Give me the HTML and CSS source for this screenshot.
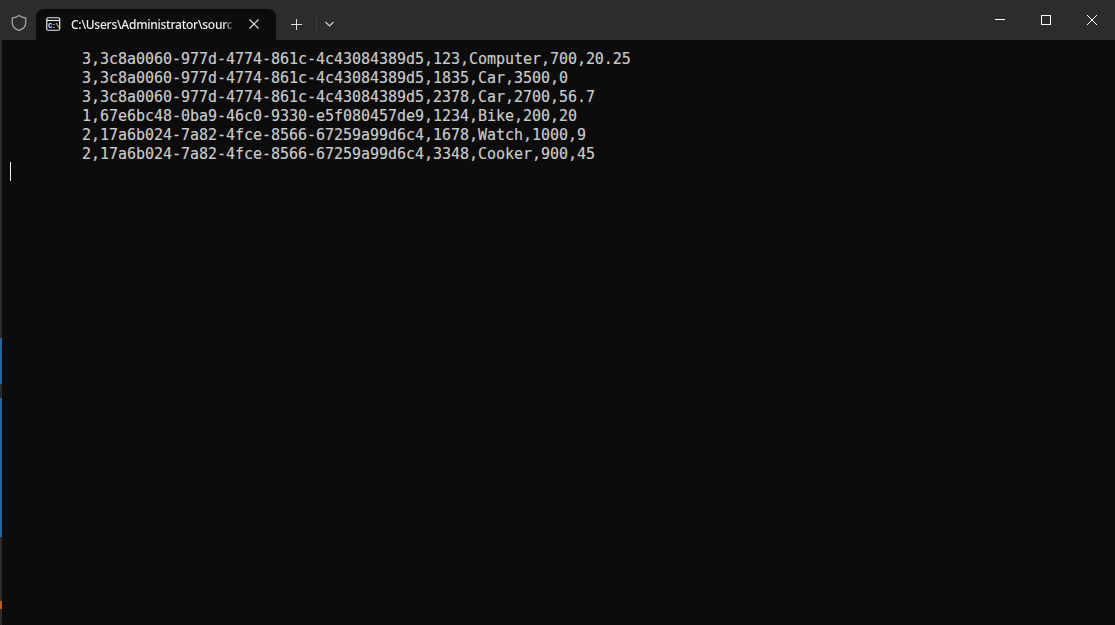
FILE: index.html
```html
<!DOCTYPE html>
<html lang="en">
<head>
<meta charset="utf-8">
<title>Terminal</title>
<link rel="stylesheet" href="styles.css">
</head>
<body>
<div class="window">
  <header class="titlebar">
    <div class="shield-wrap">
      <svg class="shield" width="18" height="18" viewBox="0 0 18 18"><path d="M9 1.600c2 1.500 4.200 2.200 6.700 2.400v5c0 3.600-2.400 6-6.700 7.400C4.700 15 2.300 12.600 2.300 9V4C4.800 3.800 7 3.100 9 1.600z"/></svg>
    </div>
    <div class="tab">
      <svg class="tab-icon" width="16" height="15" viewBox="0 0 16 15"><rect x=".75" y=".75" width="13" height="12.500" rx="1.500"/><path d="M1 3.500h12.500"/></svg>
      <span class="tab-prompt">C:\</span>
      <span class="tab-title">C:\Users\Administrator\sourc</span>
      <svg class="tab-close" width="10" height="10" viewBox="0 0 10 10"><path d="M.5.500l9 9M9.500.500l-9 9"/></svg>
    </div>
    <button class="new-tab"><svg width="11" height="11" viewBox="0 0 11 11"><path d="M5.500 0v11M0 5.500h11"/></svg></button>
    <span class="divider"></span>
    <button class="tab-menu"><svg width="9" height="6" viewBox="0 0 9 6"><path d="M.5 1l4 4 4-4"/></svg></button>
    <div class="controls">
      <button class="ctl"><svg width="10" height="2" viewBox="0 0 10 2"><path d="M0 .500h10"/></svg></button>
      <button class="ctl"><svg width="10" height="10" viewBox="0 0 10 10"><rect x=".500" y=".500" width="9" height="9"/></svg></button>
      <button class="ctl"><svg width="10" height="10" viewBox="0 0 10 10"><path d="M0 0l10 10M10 0L0 10"/></svg></button>
    </div>
  </header>
  <main class="body">
    <div class="edge">
      <span class="seg"></span><span class="seg blue"></span><span class="seg"></span><span class="seg blue"></span><span class="seg"></span><span class="seg orange"></span><span class="seg"></span>
    </div>
    <div class="console">
      <div class="line">3,3c8a0060-977d-4774-861c-4c43084389d5,123,Computer,700,20.25</div>
      <div class="line">3,3c8a0060-977d-4774-861c-4c43084389d5,1835,Car,3500,0</div>
      <div class="line">3,3c8a0060-977d-4774-861c-4c43084389d5,2378,Car,2700,56.7</div>
      <div class="line">1,67e6bc48-0ba9-46c0-9330-e5f080457de9,1234,Bike,200,20</div>
      <div class="line">2,17a6b024-7a82-4fce-8566-67259a99d6c4,1678,Watch,1000,9</div>
      <div class="line">2,17a6b024-7a82-4fce-8566-67259a99d6c4,3348,Cooker,900,45</div>
      <div class="cursor"></div>
    </div>
  </main>
</div>
</body>
</html>
```
FILE: styles.css
```css
* { box-sizing: border-box; }
html, body { margin: 0; height: 100%; overflow: hidden; background: #0c0c0c; }
.window { display: flex; flex-direction: column; height: 625px; }
.titlebar {
  height: 40px; flex: none; display: flex; align-items: flex-end;
  background: repeating-conic-gradient(#303030 0 25%, #282828 0 50%) 0 0 / 2px 2px;
}
button { border: 0; background: none; padding: 0; display: flex; align-items: center; justify-content: center; }
svg { display: block; fill: none; stroke: #fff; }
.shield-wrap { width: 36px; height: 31px; flex: none; display: flex; align-items: center; padding: 0 0 3px 10px; }
.shield { stroke: #a0a0a0; stroke-width: 1.300; }
.tab {
  width: 240px; height: 31px; flex: none; background: #0c0c0c; border-radius: 8px 8px 0 0;
  display: flex; align-items: center; padding: 0 17px 0 10px; position: relative; margin-top: 9px;
}
.tab-icon { flex: none; stroke: #e8e8e8; stroke-width: 1.200; }
.tab-prompt {
  position: absolute; left: 12px; top: 13px; font: 700 7px/8px "Liberation Mono", monospace; color: #e8e8e8; letter-spacing: -.5px;
}
.tab-title {
  width: 164px; margin-left: 9px; flex: none; white-space: nowrap; color: #f0f0f0;
  font: 500 12px/16px "Noto Sans", sans-serif; letter-spacing: -.25px;
  -webkit-mask-image: linear-gradient(90deg, #000 93%, transparent);
  mask-image: linear-gradient(90deg, #000 93%, transparent);
}
.tab-close { margin-left: auto; stroke: #e6e6e6; stroke-width: 1.100; position: relative; top: -1px; }
.new-tab { width: 40px; height: 31px; flex: none; padding-bottom: 1px; }
.new-tab svg { stroke: #e0e0e0; }
.divider { width: 1px; height: 16px; flex: none; align-self: flex-end; margin-bottom: 8px; background: #3a3a3a; }
.tab-menu { width: 25px; height: 31px; flex: none; padding-bottom: 1px; }
.tab-menu svg { stroke: #d0d0d0; stroke-width: 1.200; }
.controls { margin-left: auto; display: flex; height: 40px; }
.ctl { width: 46px; height: 40px; padding-bottom: 1px; }
.ctl svg { stroke: #fff; stroke-width: 1; }
.body { flex: 1; display: flex; min-height: 0; }
.edge {
  width: 2px; flex: none; display: grid; grid-template-rows: 298px 46px 14px 139px 64px 8px 1fr;
  background: repeating-conic-gradient(#303030 0 25%, #282828 0 50%) 0 0 / 2px 2px;
}
.seg.blue { background: #2f6296; }
.seg.orange { background: #b8602e; }
.console {
  flex: 1; padding: 10px 0 0 80px; background: #0c0c0c; color: #cccccc; position: relative;
  font: 15px/19px "DejaVu Sans Mono", monospace; letter-spacing: -.033px; -webkit-text-stroke: .15px #cccccc;
}
.line { white-space: pre; height: 19px; }
.cursor { width: 1px; height: 19px; background: #f2f2f2; margin: -2px 0 0 -72px; }
```
